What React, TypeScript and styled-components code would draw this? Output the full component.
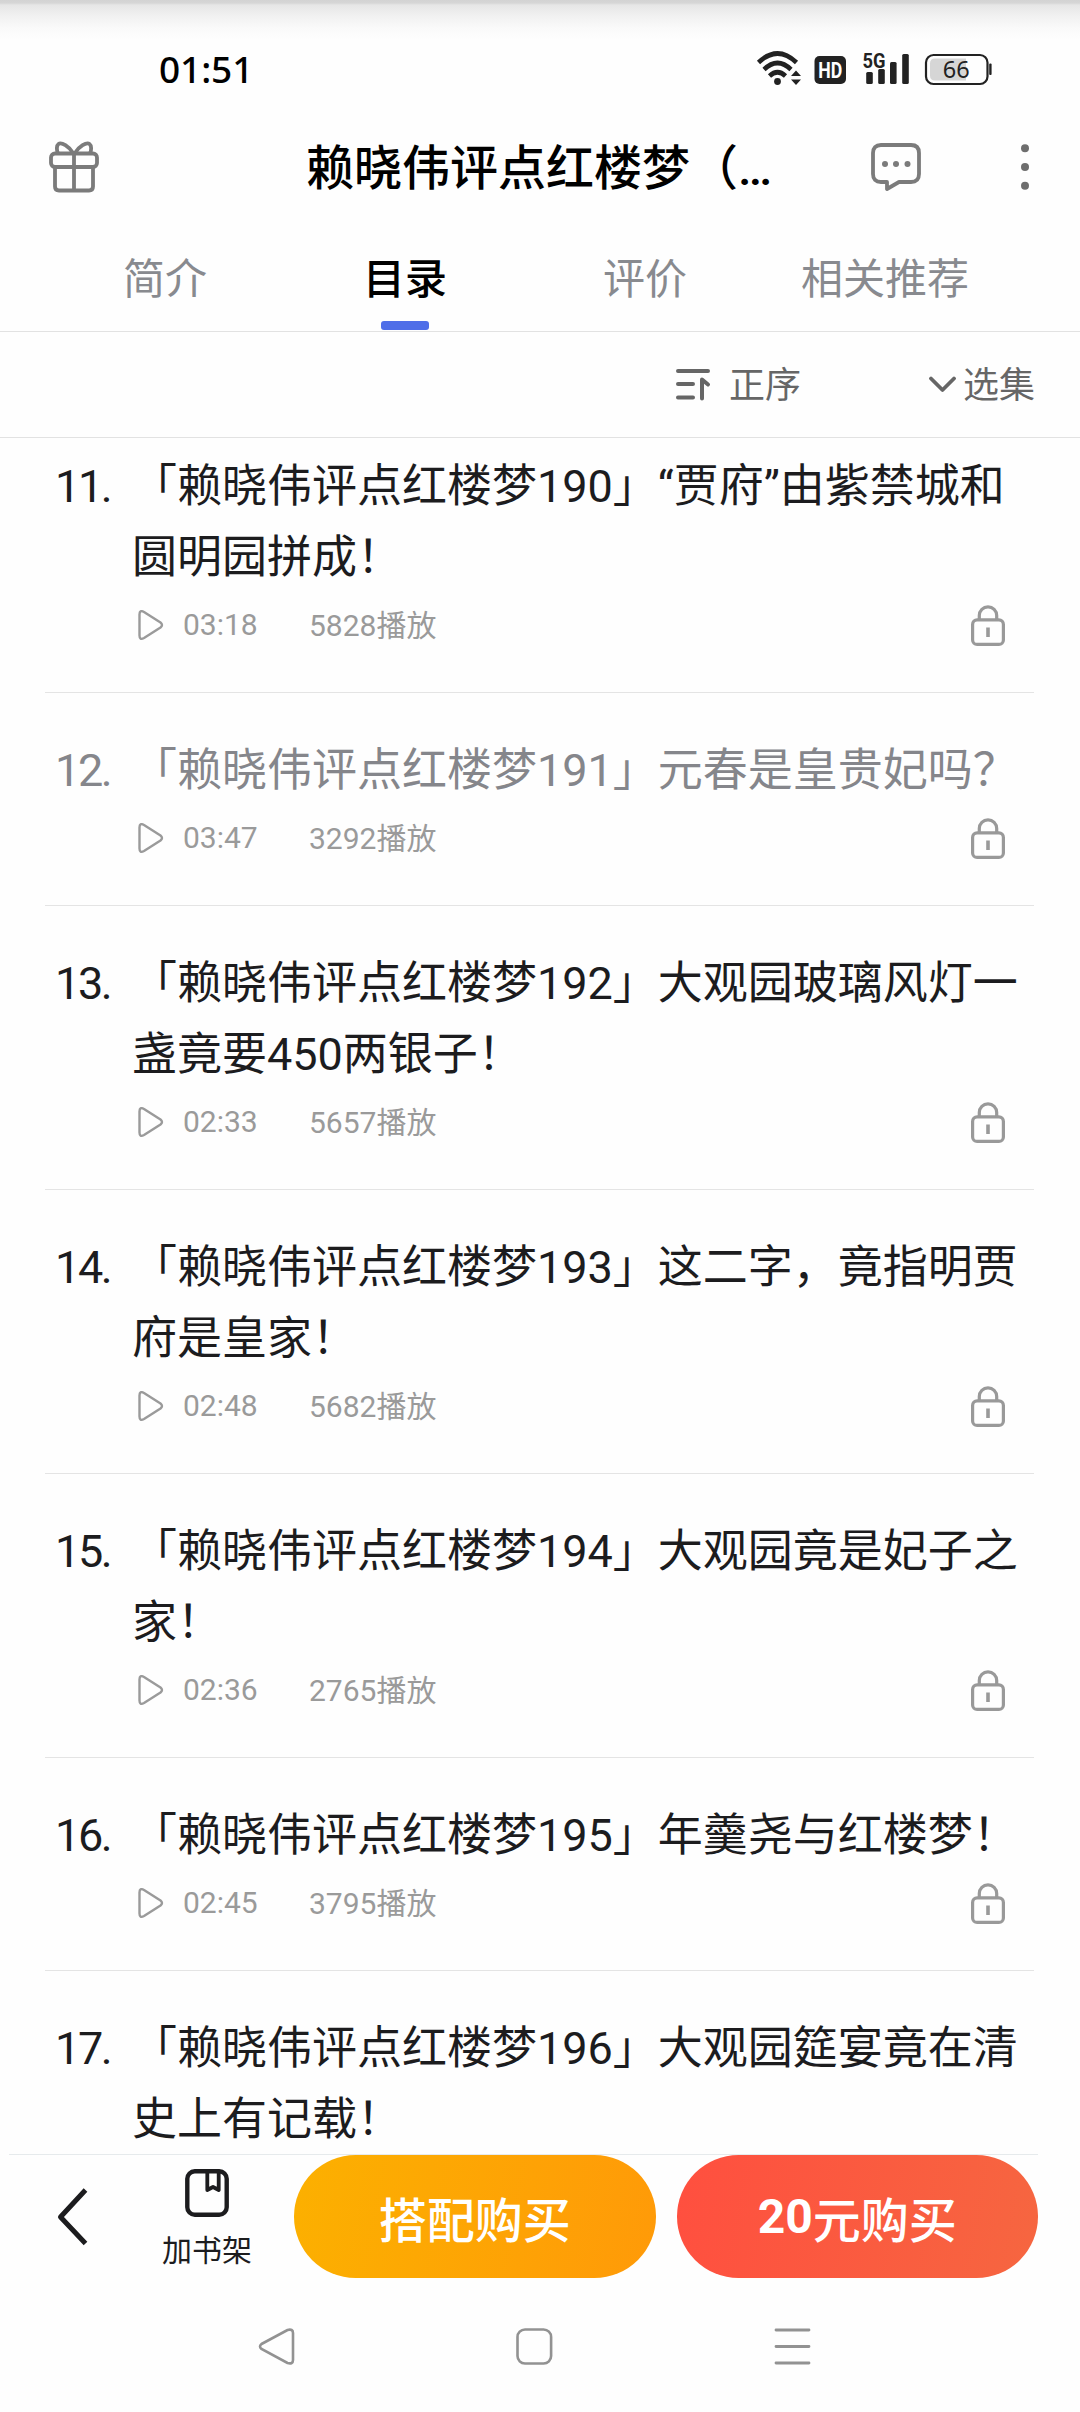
import React from "react";
import styled, { createGlobalStyle } from "styled-components";

const GlobalStyle = createGlobalStyle`
  * { box-sizing: border-box; }
  body {
    margin: 0;
    background: #fefefe;
    font-family: Roboto, "Noto Sans CJK SC", sans-serif;
  }
  svg { display: block; flex: none; }
`;

const Screen = styled.div`
  width: 1080px;
  height: 2412px;
  display: flex;
  flex-direction: column;
  overflow: hidden;
  background: linear-gradient(#d3d3d3 0, #d6d6d6 3px, #e6e6e6 5px, #f1f1f1 16px, #fafafa 28px, #fefefe 40px);
`;

const StatusBar = styled.div`
  height: 112px;
  padding: 26px 88px 0 159px;
  display: flex;
  align-items: center;
  justify-content: space-between;
`;

const Clock = styled.div`
  font: 500 37px/56px "Noto Sans", "Noto Sans CJK SC", sans-serif;
  letter-spacing: -0.1px;
  color: #000;
  padding-bottom: 1px;
`;

const Header = styled.header`
  height: 110px;
  display: grid;
  grid-template-columns: 306px 565px 1fr;
  align-items: center;
`;

const GiftButton = styled.div`
  padding-left: 49px;
`;

const Title = styled.h1`
  margin: 0;
  padding-top: 4px;
  font-size: 48px;
  font-weight: 500;
  line-height: 64px;
  color: #000;
  white-space: nowrap;
`;

const HeaderActions = styled.div`
  display: flex;
  align-items: center;
  gap: 99px;
`;

const Tabs = styled.nav`
  height: 110px;
  padding: 0 75px 0 45px;
  display: grid;
  grid-template-columns: repeat(4, 240px);
  border-bottom: 1px solid #e2e2e2;
`;

const Tab = styled.div<{ $active?: boolean }>`
  display: flex;
  flex-direction: column;
  align-items: center;
  justify-content: space-between;
  padding-top: 28px;
  padding-bottom: 1px;
  font-size: 42px;
  line-height: 60px;
  font-weight: ${(p) => (p.$active ? 500 : 400)};
  color: ${(p) => (p.$active ? "#000" : "#888a8f")};
  white-space: nowrap;
`;

const TabMark = styled.span`
  width: 48px;
  height: 9px;
  border-radius: 3px;
  background: #4f6ee8;
`;

const SortBar = styled.div`
  height: 106px;
  padding: 0 45px 0 0;
  display: flex;
  align-items: center;
  justify-content: flex-end;
  gap: 128px;
  border-bottom: 1px solid #e2e2e2;
`;

const SortOption = styled.div<{ $gap: number }>`
  display: flex;
  align-items: center;
  gap: ${(p) => p.$gap}px;
  font-size: 36px;
  line-height: 54px;
  color: #666;
`;

const SortLabel = styled.span`
  padding-top: 3px;
`;

const ScrollArea = styled.main`
  height: 1716px;
  overflow: hidden;
`;

const List = styled.ol`
  list-style: none;
  margin: -29px 46px 0 45px;
  padding: 0;
`;

const Row = styled.li<{ $played?: boolean }>`
  display: grid;
  grid-template-columns: 87px 1fr;
  padding: 42px 0 34px;
  border-bottom: 1px solid #e4e4e4;
  color: ${(p) => (p.$played ? "#85868b" : "#1c1c1e")};
  font-size: 45px;
  line-height: 71px;
`;

const RowNumber = styled.div`
  padding-left: 10px;
  letter-spacing: -2.4px;
`;

const RowTitle = styled.div``;

const Meta = styled.div`
  height: 65px;
  display: flex;
  align-items: center;
  padding: 0 29px 0 6px;
  font-size: 30px;
  line-height: 44px;
  color: #9a9a9a;
`;

const Duration = styled.span`
  width: 126px;
  margin-left: 19px;
  padding-bottom: 2px;
`;

const Plays = styled.span`
  flex: 1;
  padding-top: 1px;
`;

const BottomBar = styled.footer`
  height: 134px;
  margin: 0 42px 0 9px;
  padding-left: 48px;
  display: flex;
  align-items: flex-start;
  border-top: 1px solid #e6eaec;
`;

const BackSlot = styled.div`
  width: 98px;
  padding-top: 33px;
`;

const ShelfButton = styled.div`
  width: 104px;
  margin-right: 35px;
  padding-top: 14px;
  display: flex;
  flex-direction: column;
  align-items: center;
  gap: 12px;
  font-size: 30px;
  line-height: 44px;
  color: #1c1c1e;
`;

const BuyButton = styled.div<{ $from: string; $to: string }>`
  flex: 1;
  height: 123px;
  border-radius: 62px;
  display: flex;
  align-items: center;
  justify-content: center;
  font-size: 48px;
  font-weight: 500;
  color: #fff;
  background: linear-gradient(100deg, ${(p) => p.$from}, ${(p) => p.$to});
  & + & { margin-left: 21px; }
  b { font-weight: 700; }
`;

const SystemNav = styled.div`
  height: 124px;
  padding: 40px 269px 0 258px;
  display: flex;
  align-items: flex-start;
  justify-content: space-between;
`;

const StatusIcons = () => (
  <svg width="236" height="38" viewBox="756 50 236 38">
    <g fill="none" stroke="#222" strokeWidth="4.6">
      <path d="M758.5 62.5 Q777.5 44.5 796.5 62.5" />
      <path d="M764 69.5 Q777.5 56.5 791 69.5" />
      <path d="M769.5 76 Q777.5 68.5 785.5 76" />
    </g>
    <circle cx="777.5" cy="81.5" r="3.4" fill="#222" />
    <path d="M791 76 h10 l-5 -5.5z M791 79.5 h10 l-5 5.5z" fill="#222" />
    <rect x="814.5" y="56" width="31.5" height="28" rx="5" fill="#222" />
    <text x="830.3" y="78" textAnchor="middle" fontFamily="Roboto, sans-serif" fontWeight="700" fontSize="22" textLength="24" lengthAdjust="spacingAndGlyphs" fill="#fff">HD</text>
    <text x="862.5" y="67.5" fontFamily="Roboto, sans-serif" fontWeight="700" fontSize="21" textLength="23" lengthAdjust="spacingAndGlyphs" fill="#222">5G</text>
    <g fill="#222">
      <rect x="866.2" y="72" width="6.6" height="12" rx="1.5" />
      <rect x="878.2" y="69" width="6.6" height="15" rx="1.5" />
      <rect x="890" y="62" width="6.6" height="22" rx="1.5" />
      <rect x="902.2" y="54" width="6.6" height="30" rx="1.5" />
      <rect x="989.2" y="63.5" width="2.4" height="11.5" rx="1" />
    </g>
    <rect x="926" y="55" width="61.5" height="29" rx="7.5" fill="none" stroke="#222" strokeWidth="2.2" />
    <path d="M935 58.5 h31 v22 h-31 q-5 0 -5 -5 v-12 q0 -5 5 -5z" fill="#d6d6d6" />
    <text x="956.3" y="78" textAnchor="middle" fontFamily="'Noto Sans', sans-serif" fontSize="23.5" fill="#222">66</text>
  </svg>
);

const GiftIcon = () => (
  <svg width="50" height="52" viewBox="0 0 50 52" fill="none" stroke="#7b7b7b" strokeWidth="3.8">
    <rect x="2" y="12.5" width="46" height="13.5" rx="4" />
    <path d="M6 26 V45.5 q0 4 4 4 H40 q4 0 4 -4 V26 M25 12 V49" />
    <path d="M24 12 C20 5.5 12.500 0.8 9.5 3 C7.500 4.5 7.500 9 8.800 12 M26 12 C30 5.5 37.500 0.8 40.500 3 C42.500 4.5 42.500 9 41.200 12" />
  </svg>
);

const CommentIcon = () => (
  <svg width="50" height="48" viewBox="0 0 50 48">
    <path d="M10 2 H40 Q48 2 48 10 V31 Q48 39 40 39 H28 L16 46 V39 H10 Q2 39 2 31 V10 Q2 2 10 2z" fill="none" stroke="#7b7b7b" strokeWidth="3.8" strokeLinejoin="round" />
    <g fill="#7b7b7b">
      <circle cx="14" cy="21" r="3" />
      <circle cx="25" cy="21" r="3" />
      <circle cx="36.5" cy="21" r="3" />
    </g>
  </svg>
);

const MoreIcon = () => (
  <svg width="10" height="48" viewBox="0 0 10 48" fill="#6e6e6e">
    <circle cx="5" cy="5.3" r="4" />
    <circle cx="5" cy="24" r="4" />
    <circle cx="5" cy="42.7" r="4" />
  </svg>
);

const SortIcon = () => (
  <svg width="36" height="34" viewBox="0 0 36 34" fill="none" stroke="#666" strokeWidth="4" strokeLinecap="round" strokeLinejoin="round">
    <path d="M3 3 H33 M3 16 H18 M3 29.5 H18 M27 30.5 V11.5 L33 16.5" />
  </svg>
);

const ChevronDown = () => (
  <svg width="27" height="17" viewBox="0 0 27 17" fill="none" stroke="#666" strokeWidth="3.8" strokeLinecap="round" strokeLinejoin="round">
    <path d="M2 2.5 L13.5 14 L25 2.5" />
  </svg>
);

const PlayIcon = () => (
  <svg width="26" height="32" viewBox="0 0 26 32" fill="none" stroke="#9a9a9a" strokeWidth="2.4">
    <path d="M1.5 4.5 Q1.5 -0.5 6 2 L22.5 12.5 Q25.5 15 22.5 17.5 L6 28 Q1.5 30.5 1.5 25.5z" strokeLinejoin="round" />
  </svg>
);

const LockIcon = () => (
  <svg width="34" height="41" viewBox="0 0 34 41" fill="none" stroke="#999" strokeWidth="3.2">
    <rect x="1.6" y="14.9" width="30.8" height="24.5" rx="4.5" />
    <path d="M8.3 15 V10.5 A8.700 8.700 0 0 1 25.7 10.5 V15" />
    <path d="M17 22.5 V32" strokeWidth="3.6" />
  </svg>
);

const BackIcon = () => (
  <svg width="32" height="58" viewBox="0 0 32 58" fill="none" stroke="#1c1c1e" strokeWidth="5">
    <path d="M28.5 2 L3.5 29 L28.5 55.500" strokeLinejoin="round" />
  </svg>
);

const ShelfIcon = () => (
  <svg width="44" height="48" viewBox="0 0 44 48" fill="none" stroke="#1c1c1e" strokeWidth="4.4">
    <rect x="2.3" y="2.3" width="39.4" height="43.4" rx="7.5" />
    <path d="M22.300 3 V21 L28 18 L33.700 21 V3" strokeWidth="3.8" strokeLinejoin="round" />
  </svg>
);

const episodes = [
  { n: 11, title: "「赖晓伟评点红楼梦190」“贾府”由紫禁城和圆明园拼成！", time: "03:18", plays: 5828 },
  { n: 12, title: "「赖晓伟评点红楼梦191」元春是皇贵妃吗？", time: "03:47", plays: 3292, played: true },
  { n: 13, title: "「赖晓伟评点红楼梦192」大观园玻璃风灯一盏竟要450两银子！", time: "02:33", plays: 5657 },
  { n: 14, title: "「赖晓伟评点红楼梦193」这二字，竟指明贾府是皇家！", time: "02:48", plays: 5682 },
  { n: 15, title: "「赖晓伟评点红楼梦194」大观园竟是妃子之家！", time: "02:36", plays: 2765 },
  { n: 16, title: "「赖晓伟评点红楼梦195」年羹尧与红楼梦！", time: "02:45", plays: 3795 },
  { n: 17, title: "「赖晓伟评点红楼梦196」大观园筵宴竟在清史上有记载！" },
];

export default function App() {
  return (
    <Screen lang="zh-CN">
      <GlobalStyle />
      <StatusBar>
        <Clock>01:51</Clock>
        <StatusIcons />
      </StatusBar>
      <Header>
        <GiftButton><GiftIcon /></GiftButton>
        <Title>赖晓伟评点红楼梦（…</Title>
        <HeaderActions>
          <CommentIcon />
          <MoreIcon />
        </HeaderActions>
      </Header>
      <Tabs>
        <Tab>简介</Tab>
        <Tab $active>目录<TabMark /></Tab>
        <Tab>评价</Tab>
        <Tab>相关推荐</Tab>
      </Tabs>
      <SortBar>
        <SortOption $gap={18}><SortIcon /><SortLabel>正序</SortLabel></SortOption>
        <SortOption $gap={7}><ChevronDown /><SortLabel>选集</SortLabel></SortOption>
      </SortBar>
      <ScrollArea>
        <List>
          {episodes.map((e) => (
            <Row key={e.n} $played={e.played}>
              <RowNumber>{e.n}.</RowNumber>
              <div>
                <RowTitle>{e.title}</RowTitle>
                {e.time && (
                  <Meta>
                    <PlayIcon />
                    <Duration>{e.time}</Duration>
                    <Plays>{e.plays}播放</Plays>
                    <LockIcon />
                  </Meta>
                )}
              </div>
            </Row>
          ))}
        </List>
      </ScrollArea>
      <BottomBar>
        <BackSlot><BackIcon /></BackSlot>
        <ShelfButton><ShelfIcon />加书架</ShelfButton>
        <BuyButton $from="#fcb000" $to="#ff9a08">搭配购买</BuyButton>
        <BuyButton $from="#ff4f3f" $to="#f66640"><b>20</b>元购买</BuyButton>
      </BottomBar>
      <SystemNav>
        <svg width="37" height="37" viewBox="0 0 37 37" fill="none" stroke="#929292" strokeWidth="2.6">
          <path d="M3.5 16 L29.5 2 Q35 0.5 35 5 V32 Q35 36.5 29.5 35 L3.5 21 Q0.5 18.5 3.5 16z" />
        </svg>
        <svg width="37" height="37" viewBox="0 0 37 37" fill="none" stroke="#929292" strokeWidth="2.6">
          <rect x="1.5" y="1.5" width="33.6" height="34" rx="7.5" />
        </svg>
        <svg width="37" height="37" viewBox="0 0 37 37" fill="none" stroke="#929292" strokeWidth="2.8" strokeLinecap="round">
          <path d="M2 2 H35 M2 18.5 H35 M2 35 H35" />
        </svg>
      </SystemNav>
    </Screen>
  );
}
